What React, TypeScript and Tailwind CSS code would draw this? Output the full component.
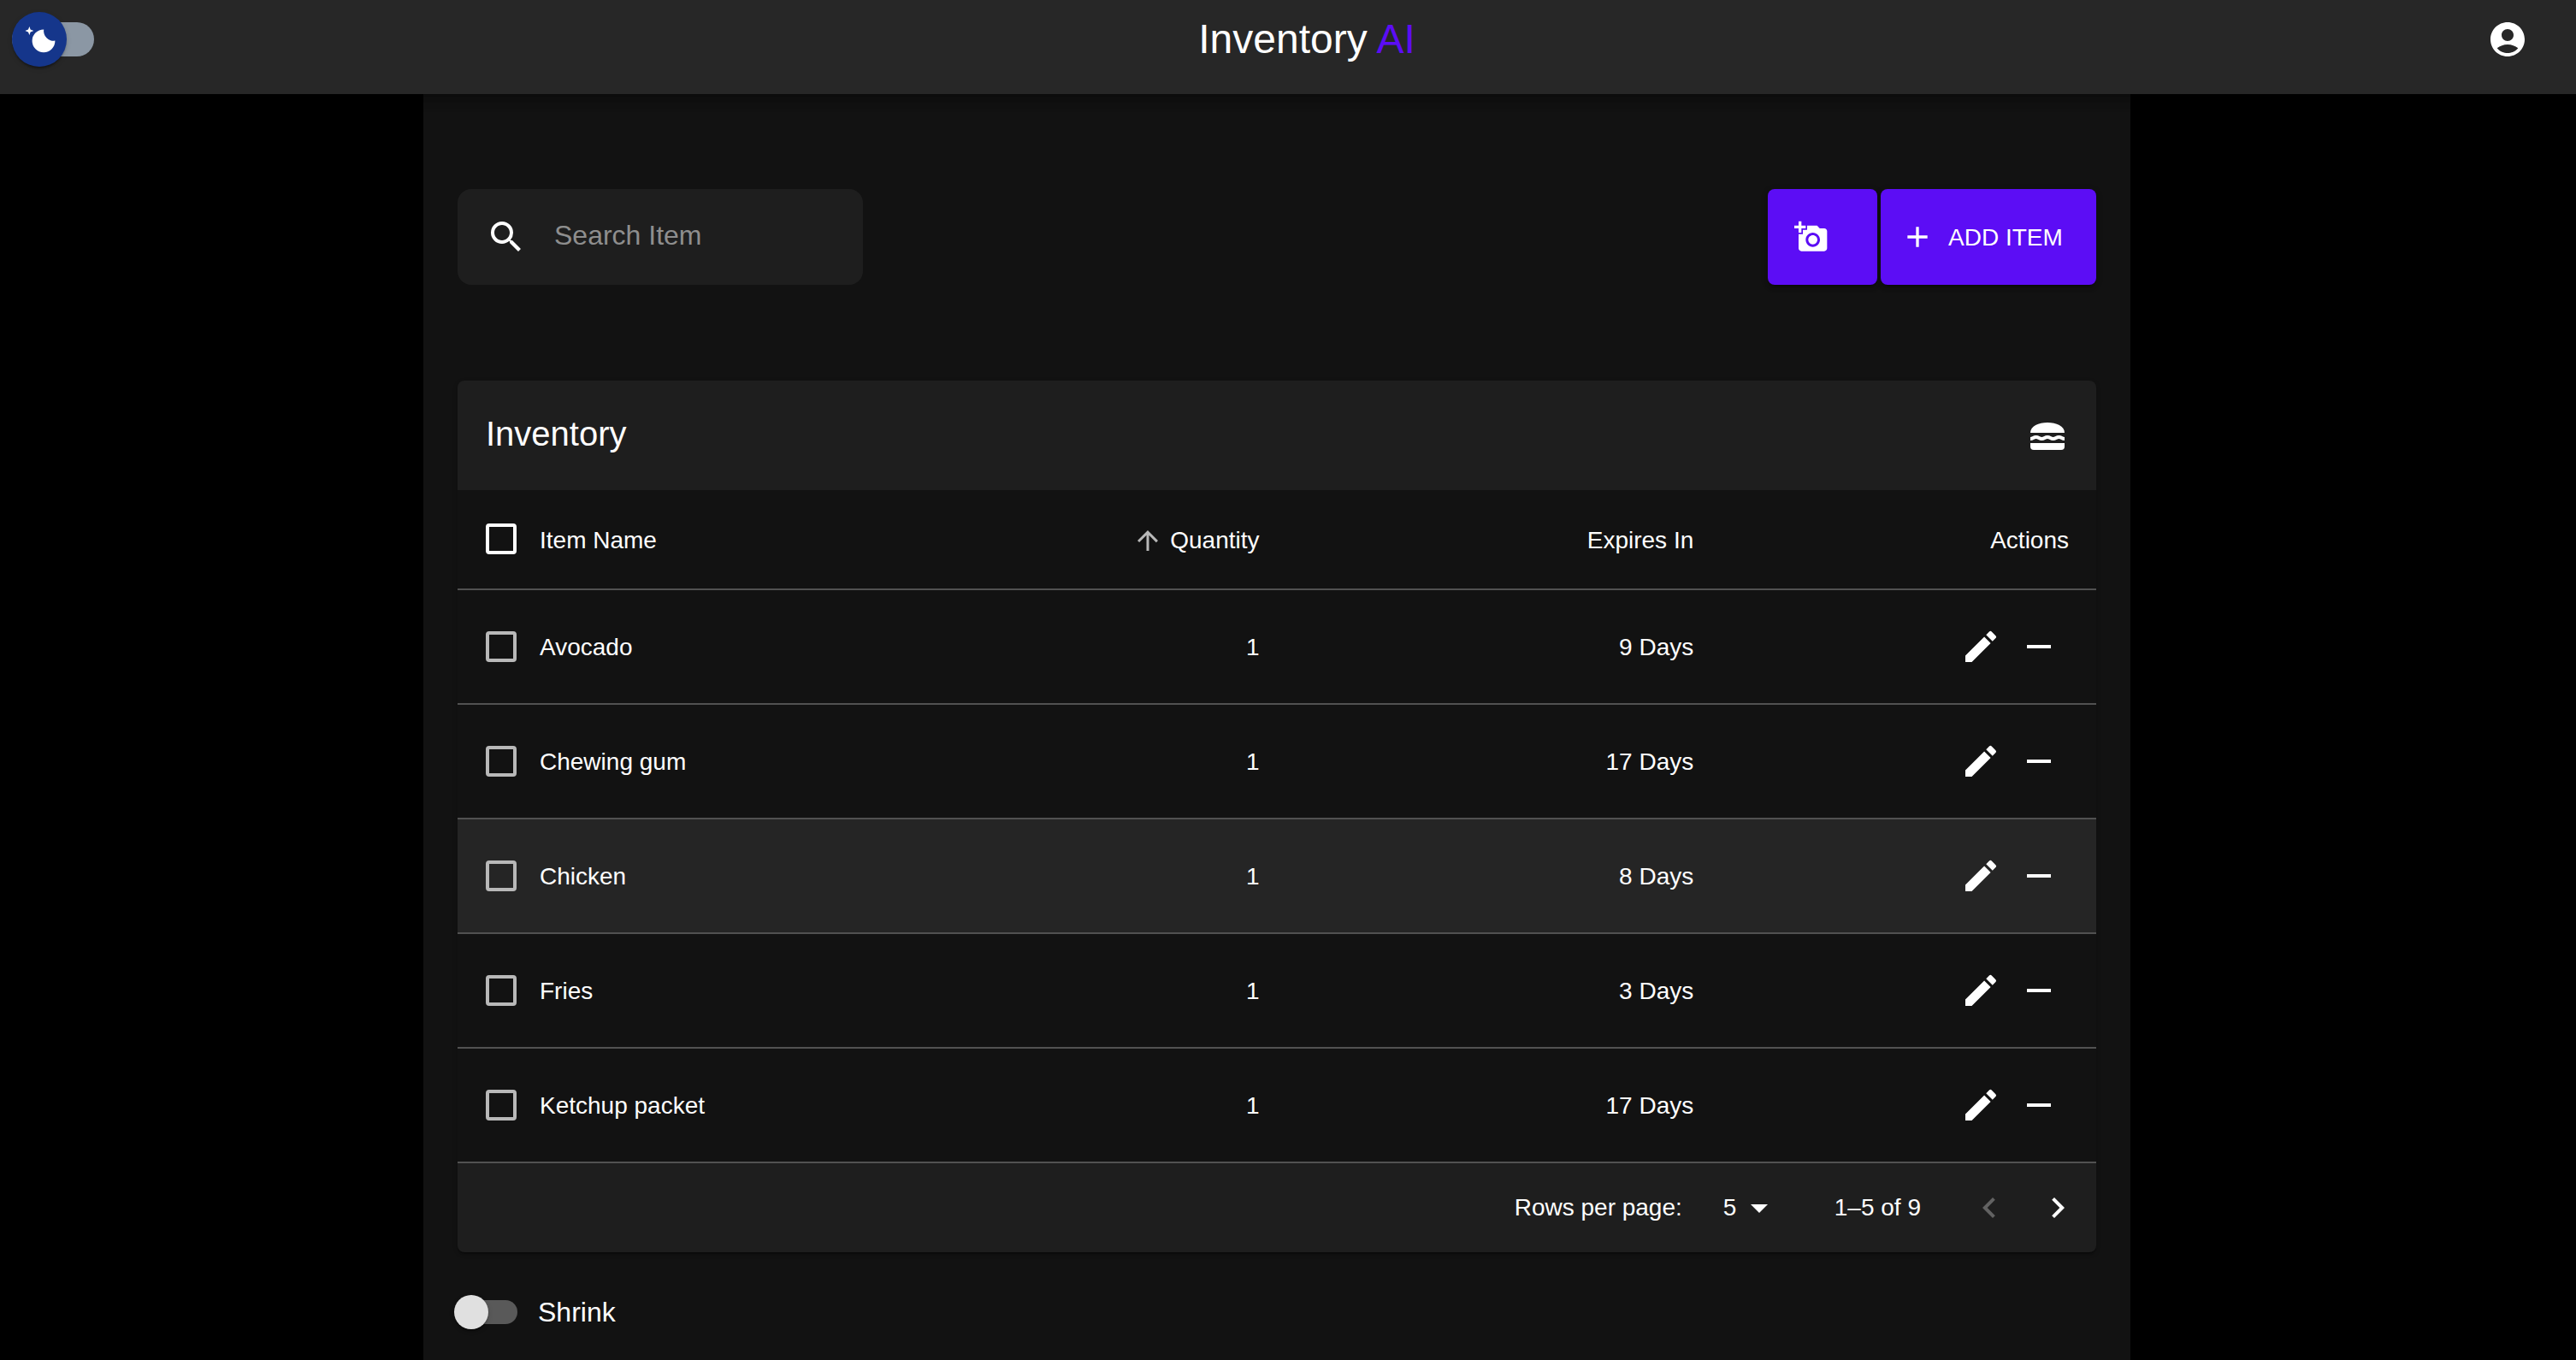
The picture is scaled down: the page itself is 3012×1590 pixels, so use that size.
import { useState } from "react";
import {
  MdAdd,
  MdArrowDropDown,
  MdArrowUpward,
  MdEdit,
  MdKeyboardArrowLeft,
  MdKeyboardArrowRight,
  MdRemove,
  MdSearch,
} from "react-icons/md";

const items = [
  { name: "Avocado", quantity: 1, expires: "9 Days" },
  { name: "Chewing gum", quantity: 1, expires: "17 Days" },
  { name: "Chicken", quantity: 1, expires: "8 Days", active: true },
  { name: "Fries", quantity: 1, expires: "3 Days" },
  { name: "Ketchup packet", quantity: 1, expires: "17 Days" },
];

function AccountIcon() {
  return (
    <svg viewBox="0 0 24 24" className="size-12 fill-current" aria-hidden="true">
      <path d="M12 2C6.48 2 2 6.48 2 12s4.48 10 10 10 10-4.48 10-10S17.52 2 12 2zm0 4c1.93 0 3.5 1.57 3.5 3.5S13.93 13 12 13s-3.5-1.57-3.5-3.5S10.07 6 12 6zm0 14c-2.03 0-4.43-.82-6.14-2.88C7.55 15.8 9.68 15 12 15s4.45.8 6.14 2.12C16.43 19.18 14.03 20 12 20z" />
    </svg>
  );
}

function MoonIcon() {
  return (
    <svg viewBox="0 0 20 20" className="size-10 fill-white" aria-hidden="true">
      <path d="M4.2 2.5l-.7 1.8-1.8.7 1.8.7.7 1.8.6-1.8L6.7 5l-1.9-.7-.6-1.8zm15 8.3a6.7 6.7 0 11-6.6-6.6 5.8 5.8 0 006.6 6.6z" />
    </svg>
  );
}

function CameraPlusIcon() {
  return (
    <svg viewBox="0 0 24 24" className="size-10 fill-current" aria-hidden="true">
      <path d="M3 4V1h2v3h3v2H5v3H3V6H0V4h3zm3 6V7h3V4h7l1.83 2H21c1.1 0 2 .9 2 2v12c0 1.1-.9 2-2 2H5c-1.1 0-2-.9-2-2V10h3zm7 9c2.76 0 5-2.24 5-5s-2.24-5-5-5-5 2.24-5 5 2.24 5 5 5zm-3.2-5c0 1.77 1.43 3.2 3.2 3.2s3.2-1.43 3.2-3.2-1.43-3.2-3.2-3.2-3.2 1.43-3.2 3.2z" />
    </svg>
  );
}

function BurgerIcon() {
  return (
    <svg viewBox="0 0 24 24" className="size-12 fill-current" aria-hidden="true">
      <path d="M2 10c0-3.9 4.9-6 10-6s10 2.1 10 6z" />
      <path
        d="M2 13.5c1.67 0 1.67-1 3.33-1s1.67 1 3.34 1 1.66-1 3.33-1 1.67 1 3.33 1 1.67-1 3.34-1 1.66 1 3.33 1"
        fill="none"
        stroke="currentColor"
        strokeWidth="2"
      />
      <path d="M2 16h20v2a2 2 0 0 1-2 2H4a2 2 0 0 1-2-2z" />
    </svg>
  );
}

function ThemeSwitch() {
  return (
    <label className="ml-3.5 flex h-[92px] w-[110px] shrink-0 cursor-pointer items-center">
      <input type="checkbox" role="switch" aria-label="Dark mode" className="peer sr-only" defaultChecked />
      <span className="flex h-10 w-24 items-center rounded-full bg-[#8b97a4]">
        <span className="flex size-16 shrink-0 items-center justify-center rounded-full bg-[#15368b] shadow-[0_4px_2px_-2px_rgba(0,0,0,0.2),0_2px_2px_0_rgba(0,0,0,0.14),0_2px_6px_0_rgba(0,0,0,0.12)]">
          <MoonIcon />
        </span>
      </span>
    </label>
  );
}

function Checkbox({ label, header = false }: { label: string; header?: boolean }) {
  return (
    <input
      type="checkbox"
      aria-label={label}
      className={
        header
          ? "block size-9 cursor-pointer appearance-none rounded border-4 border-white checked:bg-white"
          : "block size-9 cursor-pointer appearance-none rounded border-4 border-[#b8b8b8] checked:bg-[#b8b8b8]"
      }
    />
  );
}

function InventoryTable() {
  return (
    <section className="mt-28 overflow-hidden rounded-lg bg-[#1e1e1e] shadow-[0_4px_2px_-2px_rgba(0,0,0,0.2),0_2px_2px_0_rgba(0,0,0,0.14),0_2px_6px_0_rgba(0,0,0,0.12)]">
      <div className="flex h-32 items-center justify-between px-[33px]">
        <h2 className="pb-1 text-[40px] leading-[64px]">Inventory</h2>
        <button type="button" aria-label="Inventory menu" className="pt-0.5">
          <BurgerIcon />
        </button>
      </div>
      <table className="w-full table-fixed border-separate border-spacing-0 bg-[#121212] text-[28px] leading-10">
        <colgroup>
          <col className="w-24" />
          <col />
          <col className="w-[26.5%]" />
          <col className="w-[26.5%]" />
          <col className="w-[22.9%]" />
        </colgroup>
        <thead>
          <tr className="h-[117px] [&>th]:border-b-2 [&>th]:border-[#515151] [&>th]:font-normal">
            <th className="pb-0.5 pl-[33px] text-left">
              <Checkbox header label="Select all items" />
            </th>
            <th scope="col" className="pt-0.5 text-left">Item Name</th>
            <th scope="col" aria-sort="ascending" className="pt-0.5 pr-8">
              <button type="button" className="ml-auto flex items-center gap-2">
                <MdArrowUpward className="size-9 text-[#b8b8b8]" />
                Quantity
              </button>
            </th>
            <th scope="col" className="pt-0.5 pr-8 text-right">Expires In</th>
            <th scope="col" className="pt-0.5 pr-8 text-right">Actions</th>
          </tr>
        </thead>
        <tbody>
          {items.map((item) => (
            <tr
              key={item.name}
              className={
                item.active
                  ? "h-[134px] bg-[#252525] [&>td]:border-b-2 [&>td]:border-[#515151]"
                  : "h-[134px] hover:bg-[#252525] [&>td]:border-b-2 [&>td]:border-[#515151]"
              }
            >
              <td className="pl-[33px]">
                <Checkbox label={"Select " + item.name} />
              </td>
              <td className="pt-0.5">{item.name}</td>
              <td className="pt-0.5 pr-8 text-right">{item.quantity}</td>
              <td className="pt-0.5 pr-8 text-right">{item.expires}</td>
              <td className="pr-[43px]">
                <div className="flex justify-end gap-5">
                  <button type="button" aria-label={"Edit " + item.name}>
                    <MdEdit className="size-12" />
                  </button>
                  <button type="button" aria-label={"Remove " + item.name}>
                    <MdRemove className="size-12" />
                  </button>
                </div>
              </td>
            </tr>
          ))}
        </tbody>
      </table>
      <div className="flex h-[104px] items-center justify-end pr-[21px] text-[28px] leading-10">
        <label htmlFor="rows-per-page">Rows per page:</label>
        <div className="relative ml-12 flex h-12 w-[66px] items-center">
          <select
            id="rows-per-page"
            defaultValue="5"
            className="h-12 w-full cursor-pointer appearance-none bg-transparent text-[28px] leading-10"
          >
            <option value="5">5</option>
            <option value="10">10</option>
            <option value="25">25</option>
          </select>
          <MdArrowDropDown className="pointer-events-none absolute right-0 size-12" />
        </div>
        <p className="ml-16">1–5 of 9</p>
        <button type="button" disabled aria-label="Previous page" className="ml-14 text-[#626262]">
          <MdKeyboardArrowLeft className="size-12" />
        </button>
        <button type="button" aria-label="Next page" className="ml-8">
          <MdKeyboardArrowRight className="size-12" />
        </button>
      </div>
    </section>
  );
}

export default function App() {
  const [query, setQuery] = useState("");

  return (
    <div className="flex min-h-screen flex-col bg-black font-['Liberation_Sans',Arial,sans-serif] text-white">
      <header className="relative flex h-[110px] items-start bg-[#272727] shadow-[0_4px_8px_-2px_rgba(0,0,0,0.2),0_8px_10px_0_rgba(0,0,0,0.14),0_2px_20px_0_rgba(0,0,0,0.12)]">
        <ThemeSwitch />
        <h1 className="flex-1 pt-3.5 pl-6 text-center text-5xl leading-16">
          Inventory <span className="text-[#5c0df5]">AI</span>
        </h1>
        <button type="button" aria-label="Account" className="mr-14 flex h-[92px] shrink-0 items-center">
          <AccountIcon />
        </button>
      </header>

      <div className="flex flex-1 justify-center pr-[26px]">
        <main className="w-full max-w-[1996px] bg-[#121212] px-10 pt-[111px]">
          <div className="flex h-28 justify-between">
            <div className="flex w-[474px] items-center rounded-2xl bg-[#1e1e1e] pl-[33px]">
              <MdSearch className="size-12 shrink-0" />
              <input
                type="search"
                aria-label="Search Item"
                placeholder="Search Item"
                value={query}
                onChange={(event) => setQuery(event.target.value)}
                className="ml-8 min-w-0 flex-1 bg-transparent pb-1 text-[32px] leading-[46px] outline-none placeholder:text-[#8e8e8e]"
              />
            </div>
            <div className="flex gap-1">
              <button
                type="button"
                aria-label="Add item from photo"
                className="flex w-32 items-center rounded-lg bg-[#5c0df5] pl-[31px] shadow-[0_6px_2px_-4px_rgba(0,0,0,0.2),0_4px_4px_0_rgba(0,0,0,0.14),0_2px_10px_0_rgba(0,0,0,0.12)]"
              >
                <CameraPlusIcon />
              </button>
              <button
                type="button"
                className="flex w-[252px] items-center gap-4 rounded-lg bg-[#5c0df5] pl-[23px] text-[28px] leading-[49px] shadow-[0_6px_2px_-4px_rgba(0,0,0,0.2),0_4px_4px_0_rgba(0,0,0,0.14),0_2px_10px_0_rgba(0,0,0,0.12)]"
              >
                <MdAdd className="size-10" />
                ADD ITEM
              </button>
            </div>
          </div>

          <InventoryTable />

          <label className="mt-10 -ml-1 flex w-fit cursor-pointer items-center text-[32px] leading-12">
            <input type="checkbox" role="switch" className="peer sr-only" />
            <span className="flex h-15 w-[98px] items-center">
              <span className="ml-1.5 flex h-7 w-[68px] items-center rounded-full bg-[#595959]">
                <span className="-ml-1.5 size-10 shrink-0 rounded-full bg-[#e0e0e0] shadow-[0_4px_2px_-2px_rgba(0,0,0,0.2),0_2px_2px_0_rgba(0,0,0,0.14),0_2px_6px_0_rgba(0,0,0,0.12)]" />
              </span>
            </span>
            Shrink
          </label>
        </main>
      </div>
    </div>
  );
}
